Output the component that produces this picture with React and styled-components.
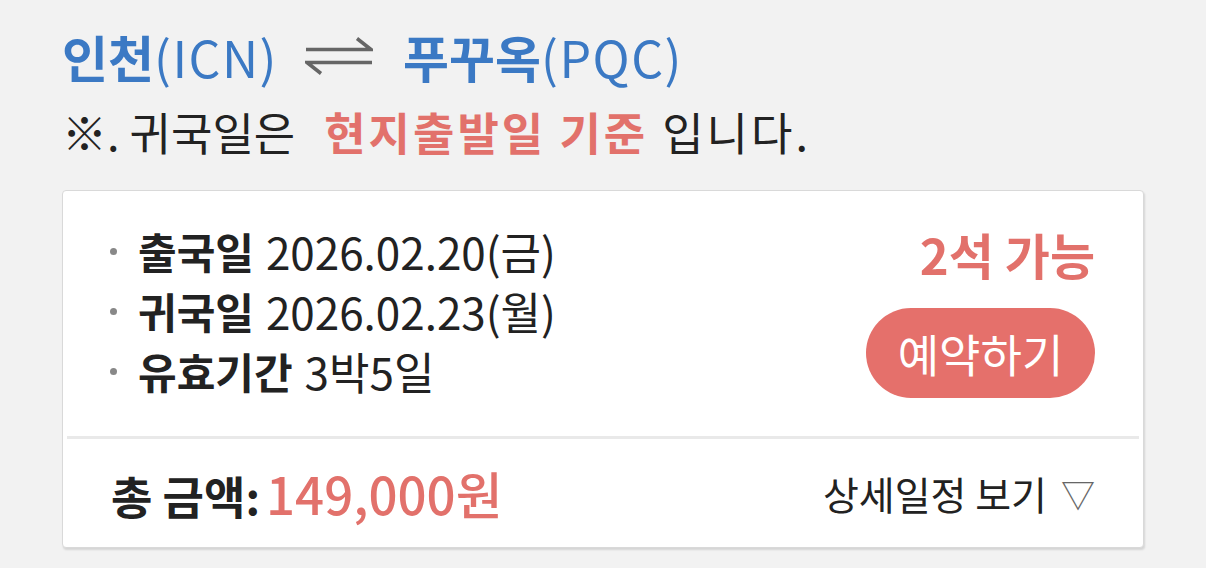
import * as React from 'react';
import styled, { createGlobalStyle } from 'styled-components';

const GlobalStyle = createGlobalStyle`
    body {
        margin: 0;
        background: #f2f2f2;
        font-family: "Noto Sans CJK KR", "Noto Sans", sans-serif;
        color: #222;
    }
`;

const Page = styled.div`
    padding: 24px 62px 20px 62px;
`;

const Route = styled.div`
    display: flex;
    align-items: center;
    font-size: 50px;
    line-height: 64px;
    color: #3b79c4;
    white-space: nowrap;
`;

const City = styled.span`
    font-weight: 700;
`;

const Code = styled.span`
    font-weight: 400;
    letter-spacing: 1.5px;
`;

const ArrowWrap = styled.span`
    display: flex;
    margin: 0 30px 0 27px;
`;

const Notice = styled.div`
    margin-top: 14px;
    font-size: 45px;
    line-height: 60px;
    color: #222;
    white-space: nowrap;
`;

const Highlight = styled.span`
    margin: 0 14px 0 29px;
    color: #e2716b;
    font-weight: 700;
    letter-spacing: 3px;
`;

const Tail = styled.span`
    letter-spacing: 3px;
`;

const Card = styled.div`
    margin-top: 28px;
    background: #fff;
    border: 1px solid #d9d9d9;
    border-radius: 4px;
    box-shadow: 1px 2px 2px rgba(0, 0, 0, 0.12);
    display: flex;
    flex-direction: column;
`;

const CardBody = styled.div`
    display: flex;
    justify-content: space-between;
    padding: 30px 48px 35px 47px;
`;

const InfoList = styled.ul`
    list-style: none;
    margin: 0;
    padding: 0;
`;

const InfoItem = styled.li`
    display: flex;
    align-items: center;
    font-size: 44px;
    line-height: 60px;
    white-space: nowrap;
    &::before {
        content: '';
        width: 7px;
        height: 7px;
        border-radius: 50%;
        background: #888;
        margin-right: 21px;
    }
`;

const Label = styled.b`
    font-weight: 700;
    font-size: 42px;
    margin-right: 12px;
`;

const Side = styled.div`
    display: flex;
    flex-direction: column;
    align-items: flex-end;
`;

const Seats = styled.div`
    color: #e2716b;
    font-size: 49px;
    font-weight: 700;
    line-height: 58px;
    margin-top: 4px;
`;

const BookButton = styled.button`
    margin-top: 25px;
    width: 229px;
    height: 90px;
    border: none;
    border-radius: 45px;
    background: #e5706b;
    color: #fff;
    font-family: inherit;
    font-size: 45px;
    font-weight: 400;
    cursor: pointer;
`;

const Divider = styled.hr`
    margin: 0 4px;
    border: none;
    border-top: 3px solid #e9e9e9;
`;

const CardFooter = styled.div`
    display: flex;
    justify-content: space-between;
    align-items: center;
    height: 108px;
    padding: 0 48px 0 48px;
`;

const Total = styled.div`
    display: flex;
    align-items: baseline;
    font-size: 45px;
    font-weight: 700;
    white-space: nowrap;
`;

const Price = styled.span`
    margin-left: 6px;
    color: #e2716b;
    font-size: 51px;
    font-weight: 500;
`;

const DetailToggle = styled.div`
    display: flex;
    align-items: center;
    font-size: 39px;
    color: #222;
    white-space: nowrap;
`;

const Triangle = styled.span`
    margin-left: 14px;
    color: #666;
    font-size: 34px;
`;

const SwapArrow = () => (
    <svg width="68" height="40" viewBox="0 0 68 40">
        <g stroke="#666" strokeWidth="3.5" fill="none" strokeLinecap="butt">
            <path d="M1 13.5 H66 L52 2.5" />
            <path d="M67 26.5 H2 L16 37.5" />
        </g>
    </svg>
);

const App = () => {
    return (
        <Page>
            <GlobalStyle />
            <Route>
                <City>인천</City><Code>(ICN)</Code>
                <ArrowWrap><SwapArrow /></ArrowWrap>
                <City>푸꾸옥</City><Code>(PQC)</Code>
            </Route>
            <Notice>
                ※. 귀국일은<Highlight>현지출발일 기준</Highlight><Tail>입니다.</Tail>
            </Notice>
            <Card>
                <CardBody>
                    <InfoList>
                        <InfoItem><Label>출국일</Label>2026.02.20(금)</InfoItem>
                        <InfoItem><Label>귀국일</Label>2026.02.23(월)</InfoItem>
                        <InfoItem><Label>유효기간</Label>3박5일</InfoItem>
                    </InfoList>
                    <Side>
                        <Seats>2석 가능</Seats>
                        <BookButton>예약하기</BookButton>
                    </Side>
                </CardBody>
                <Divider />
                <CardFooter>
                    <Total>총 금액: <Price>149,000원</Price></Total>
                    <DetailToggle>상세일정 보기<Triangle>▽</Triangle></DetailToggle>
                </CardFooter>
            </Card>
        </Page>
    );
};

export default App;
